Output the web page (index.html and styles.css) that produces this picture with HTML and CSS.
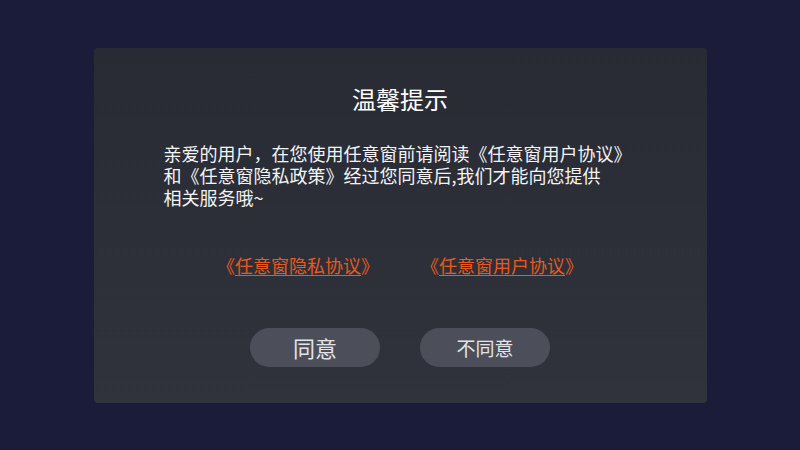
FILE: index.html
```html
<!DOCTYPE html>
<html lang="zh-CN">
<head>
<meta charset="utf-8">
<title>温馨提示</title>
<link rel="stylesheet" href="styles.css">
</head>
<body>
<div class="dialog">
  <div class="title">温馨提示</div>
  <div class="message">亲爱的用户，在您使用任意窗前请阅读《任意窗用户协议》<br>和《任意窗隐私政策》经过您同意后,我们才能向您提供<br>相关服务哦~</div>
  <div class="links">
    <span class="link">《<span class="u">任意窗隐私协议</span>》</span>
    <span class="link">《<span class="u">任意窗用户协议</span>》</span>
  </div>
  <div class="actions">
    <div class="btn btn-agree">同意</div>
    <div class="btn btn-disagree">不同意</div>
  </div>
</div>
</body>
</html>
```
FILE: styles.css
```css
html, body {
  margin: 0;
  padding: 0;
}
body {
  width: 800px;
  height: 450px;
  background: #1a1c39;
  display: flex;
  align-items: center;
  justify-content: center;
  font-family: "Noto Sans CJK SC", "Noto Sans", sans-serif;
  overflow: hidden;
}
.dialog {
  width: 613px;
  height: 355px;
  box-sizing: border-box;
  background: linear-gradient(180deg, #282b34 0%, #30333c 100%);
  border-radius: 4px;
  padding-top: 35px;
  display: flex;
  flex-direction: column;
}
.title {
  text-align: center;
  color: #ffffff;
  font-size: 24px;
  line-height: 32px;
}
.message {
  margin-top: 27px;
  padding-left: 70px;
  color: #f4f4f4;
  font-size: 18px;
  line-height: 22px;
}
.links {
  margin-top: 45px;
  display: flex;
  justify-content: center;
  gap: 42px;
  font-size: 18px;
  line-height: 24px;
  color: #e8591f;
}
.link .u {
  text-decoration: underline;
  text-underline-offset: 2px;
}
.actions {
  margin-top: 51px;
  display: flex;
  justify-content: center;
  gap: 40px;
}
.btn {
  width: 130px;
  height: 39px;
  border-radius: 20px;
  background: #4c4f59;
  color: #e4e4e6;
  display: flex;
  align-items: center;
  justify-content: center;
}
.btn-agree {
  font-size: 22px;
}
.btn-disagree {
  font-size: 19px;
}
```
